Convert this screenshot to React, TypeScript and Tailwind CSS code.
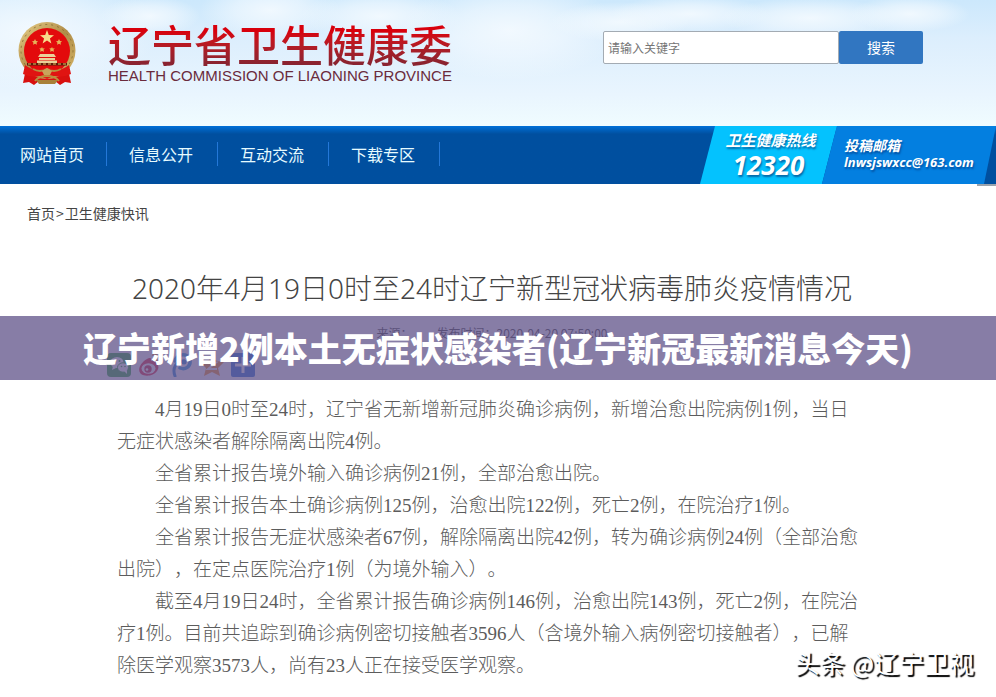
const navItems = ["网站首页", "信息公开", "互动交流", "下载专区"];

const paragraphs = [
  "4月19日0时至24时，辽宁省无新增新冠肺炎确诊病例，新增治愈出院病例1例，当日无症状感染者解除隔离出院4例。",
  "全省累计报告境外输入确诊病例21例，全部治愈出院。",
  "全省累计报告本土确诊病例125例，治愈出院122例，死亡2例，在院治疗1例。",
  "全省累计报告无症状感染者67例，解除隔离出院42例，转为确诊病例24例（全部治愈出院），在定点医院治疗1例（为境外输入）。",
  "截至4月19日24时，全省累计报告确诊病例146例，治愈出院143例，死亡2例，在院治疗1例。目前共追踪到确诊病例密切接触者3596人（含境外输入病例密切接触者），已解除医学观察3573人，尚有23人正在接受医学观察。",
];

const clouds = [
  { cx: 30, cy: 30, rx: 130, ry: 60 },
  { cx: 150, cy: 16, rx: 50, ry: 20 },
  { cx: 270, cy: 10, rx: 70, ry: 30 },
  { cx: 380, cy: 16, rx: 80, ry: 26 },
  { cx: 510, cy: 30, rx: 110, ry: 50 },
  { cx: 620, cy: 22, rx: 70, ry: 20 },
  { cx: 690, cy: 14, rx: 80, ry: 18 },
  { cx: 810, cy: 18, rx: 90, ry: 20 },
  { cx: 910, cy: 14, rx: 60, ry: 18 },
];

function Sky() {
  return (
    <svg
      className="absolute inset-0 h-full w-full"
      viewBox="0 0 996 126"
      preserveAspectRatio="none"
      aria-hidden="true"
    >
      <defs>
        <linearGradient id="sky" x1="0" y1="0" x2="0" y2="1">
          <stop offset="0" stopColor="#cce8fc" />
          <stop offset="0.3" stopColor="#dceefd" />
          <stop offset="0.75" stopColor="#e9f5fe" />
          <stop offset="1" stopColor="#f0fcff" />
        </linearGradient>
        <radialGradient id="cloud">
          <stop offset="0" stopColor="#f6fbff" stopOpacity="0.85" />
          <stop offset="0.5" stopColor="#f4faff" stopOpacity="0.55" />
          <stop offset="1" stopColor="#f4faff" stopOpacity="0" />
        </radialGradient>
      </defs>
      <rect width="996" height="126" fill="url(#sky)" />
      {clouds.map((c) => (
        <ellipse key={c.cx} {...c} fill="url(#cloud)" />
      ))}
    </svg>
  );
}

function Emblem() {
  return (
    <svg className="h-16 w-[58px]" viewBox="0 0 58 64" role="img" aria-label="国徽">
      <defs>
        <linearGradient id="gold" x1="0" y1="0" x2="1" y2="1">
          <stop offset="0" stopColor="#e9d08a" />
          <stop offset="0.5" stopColor="#b08d48" />
          <stop offset="1" stopColor="#d8b868" />
        </linearGradient>
      </defs>
      <path d="M9 42 5 61l6-1 5 3 5-4h16l5 4 5-3 6 1-4-19z" fill="#d8100f" />
      <circle cx="29" cy="28.500" r="28.500" fill="url(#gold)" />
      <circle cx="29" cy="28.500" r="26" fill="none" stroke="#8f7436" strokeWidth="1" strokeDasharray="2 4" />
      <circle cx="29" cy="29" r="23" fill="#e30a0c" />
      <path d="m29 8 1.800 5 5.200.2-4.100 3.200 1.500 5L29 18.500l-4.400 2.900 1.500-5-4.100-3.200 5.200-.2z" fill="#f7dc8b" />
      <path d="m17 17 1 2 2 .2-1.500 1.500.5 2-2-1-2 1 .5-2-1.500-1.500 2-.2zM41 17l1 2 2 .2-1.500 1.500.5 2-2-1-2 1 .5-2-1.500-1.500 2-.2z" fill="#e6b35a" />
      <path d="m24 25 .8 1.500 2-.2-1.300 1.500.5 2-2-.9-1.800.9.3-2-1.300-1.400 2-.1zM34 25l.8 1.500 2-.2-1.300 1.500.5 2-2-.9-1.800.9.3-2-1.300-1.400 2-.1z" fill="#e6b35a" />
      <path d="M22 32h14l2 3H20zM21 36h16v2H21zM19 38.500h20V41H19z" fill="#ead09a" />
      <path d="M9 41h40v2.500H9z" fill="#5d1a0d" />
      <path d="M10 42h38" stroke="#b98a42" strokeWidth="1.500" strokeDasharray="3 2" />
      <path d="M7 43q8 6 16 4l6-2 6 2q8 2 16-4l2 9q-8 4-17 2l-7 3-7-3q-9 2-17-2z" fill="#e01412" />
      <path d="M15 47q7 4 14 0 7 4 14 0M17 59q4-5 12-5t12 5" fill="none" stroke="#b9903f" strokeWidth="2" />
      <path d="m24 49 5-3 5 3-2 4h-6z" fill="#c9a35a" />
      <path d="M18 58h22l-3 4H21z" fill="#a88139" />
    </svg>
  );
}

function ShareIcons() {
  return (
    <div className="flex gap-[7px]">
      <button aria-label="微信" className="size-6">
        <svg viewBox="0 0 24 24">
          <rect width="24" height="24" rx="4" fill="#0a9a1d" />
          <ellipse cx="10" cy="9.500" rx="6.500" ry="5.500" fill="#fff" />
          <path d="m6 13-1 4 4-2z" fill="#fff" />
          <ellipse cx="16" cy="14.500" rx="5.500" ry="4.700" fill="#fff" stroke="#0a9a1d" />
          <path d="m17 18 3 3v-4z" fill="#fff" />
          <g fill="#0a9a1d">
            <circle cx="8" cy="8" r="1" />
            <circle cx="12.500" cy="8" r="1" />
            <circle cx="14.500" cy="13.500" r="0.800" />
            <circle cx="18" cy="13.500" r="0.800" />
          </g>
        </svg>
      </button>
      <button aria-label="微博" className="size-6">
        <svg viewBox="0 0 24 24">
          <path d="M9 6c3-2 5-1 4 2 4-1 6 0 5 3 3 1 3 4 1 7-3 5-12 6-16 3C-1 17 2 10 9 6z" fill="#e0001f" />
          <ellipse cx="10.500" cy="15.500" rx="7" ry="5.200" fill="#fff" />
          <circle cx="10" cy="16" r="3.700" fill="#c4001f" />
          <circle cx="9" cy="16.500" r="1.300" fill="#fff" />
          <path d="M15 2c5-1 8 3 7 8M15.500 5.500c3 0 4 2 3.500 4" fill="none" stroke="#f28a1c" strokeWidth="2" strokeLinecap="round" />
        </svg>
      </button>
      <button aria-label="腾讯微博" className="size-6">
        <svg viewBox="0 0 24 24" fill="none" strokeLinecap="round">
          <path d="M6 23C3 15 7 8 15 8" stroke="#0070d0" strokeWidth="3" />
          <path d="M6 8c1-7 13-9 15-1 1 7-5 10-10 8" stroke="#0a8ae0" strokeWidth="3.500" />
          <circle cx="15" cy="9" r="2.500" fill="#0070d0" />
        </svg>
      </button>
      <button aria-label="QQ空间" className="size-6">
        <svg viewBox="0 0 24 24">
          <path d="m12 0 3.500 7.500L24 9l-6 6 2 8-8-4-8 4 2-8-6-6 8.500-1.500z" fill="#f57c00" />
          <path d="M7 9.500h9l-8 6.500h9" fill="none" stroke="#fff" strokeWidth="2" />
        </svg>
      </button>
      <button aria-label="更多分享" className="size-6">
        <svg viewBox="0 0 24 24">
          <rect width="24" height="24" rx="2" fill="#0058d0" />
          <path d="M12 4v16M4 12h16" stroke="#fff" strokeWidth="3" />
        </svg>
      </button>
    </div>
  );
}

function Header() {
  return (
    <header className="relative">
      <Sky />
      <div className="relative flex h-[126px] items-start justify-between pl-[18px] pr-[73px]">
        <div className="flex pt-[22px]">
          <Emblem />
          <div className="ml-8 w-fit">
            <h1 className="bg-linear-to-b from-[#d8000c] from-20% to-[#8a2330] to-90% bg-clip-text pb-1 text-[43px] leading-[42px] font-medium text-transparent">
              辽宁省卫生健康委
            </h1>
            <p className="font-['Liberation_Sans'] text-[15px] leading-4 whitespace-nowrap text-[#6a2b3c]">
              HEALTH COMMISSION OF LIAONING PROVINCE
            </p>
          </div>
        </div>
        <form className="flex pt-[31px]" onSubmit={(e) => e.preventDefault()}>
          <input
            type="text"
            aria-label="关键字"
            placeholder="请输入关键字"
            className="h-[33px] w-[236px] rounded-xs border border-[#a3abb3] bg-white px-1 text-xs placeholder:text-[#757575]"
          />
          <button className="h-[33px] w-[84px] rounded-xs bg-[#3176c1] pb-0.5 text-sm text-white">
            搜索
          </button>
        </form>
      </div>
    </header>
  );
}

function Nav() {
  return (
    <nav className="relative flex h-[58px] justify-between bg-linear-to-b from-[#0070d8] to-[#004f9f] to-14%">
      <ul className="flex items-center pb-0.5">
        {navItems.map((item) => (
          <li
            key={item}
            className="border-r border-[#2478d8] pr-6 pl-[22px] text-base leading-6 text-[#e6fbff] first:pr-[22px] first:pl-5"
          >
            <a href="#">{item}</a>
          </li>
        ))}
      </ul>
      <div className="flex font-['Open_Sans','Noto_Sans_CJK_SC',sans-serif] font-bold text-white italic">
        <div className="w-[137px] bg-[#04c2fe] pt-[3px] text-center [clip-path:polygon(15px_0,100%_0,calc(100%-15px)_100%,0_100%)] [text-shadow:1px_2px_2px_#0468a8]">
          <p className="pl-1 text-[15px] leading-[22px]">卫生健康热线</p>
          <p className="text-[26px] leading-7">12320</p>
        </div>
        <div className="-ml-[15px] w-[174px] bg-[#037fe0] pt-3 pl-[22px] [clip-path:polygon(15px_0,100%_0,calc(100%-12px)_100%,0_100%)] [text-shadow:1px_2px_2px_#0450a0]">
          <p className="text-sm leading-4">投稿邮箱</p>
          <p className="text-[13px] leading-4">
            <a href="mailto:lnwsjswxcc@163.com">lnwsjswxcc@163.com</a>
          </p>
        </div>
      </div>
      <span className="absolute top-full right-0 h-0.5 w-[19px] bg-[#9aa3ad]" />
    </nav>
  );
}

export default function App() {
  return (
    <div
      lang="zh-CN"
      className="relative min-h-screen bg-white font-['Noto_Sans_CJK_SC',sans-serif] text-[#444]"
    >
      <Header />
      <Nav />

      <main className="pb-4">
        <p className="pt-[19px] pl-[27px] text-sm leading-5">
          <a href="#">首页</a>
          <span className="mx-px">&gt;</span>
          <a href="#">卫生健康快讯</a>
        </p>

        <h2 className="pt-[45px] pr-3 text-center font-['Noto_Sans','Noto_Sans_CJK_SC',sans-serif] text-[28px] leading-10 font-light text-[#444]">
          2020年4月19日0时至24时辽宁新型冠状病毒肺炎疫情情况
        </h2>

        <div className="relative mt-2 h-16">
          <p className="flex justify-center gap-6 pt-[9px] pr-3 text-xs leading-4 text-[#222]">
            <span>来源：</span>
            <span>发布时间：2020-04-20 07:50:00</span>
          </p>
          <div className="mt-3 pl-[107px]">
            <ShareIcons />
          </div>
          <div className="absolute inset-0 flex items-center justify-center bg-[#695d90]/80 text-[34px] leading-none font-black whitespace-nowrap text-white">
            辽宁新增2例本土无症状感染者(辽宁新冠最新消息今天)
          </div>
        </div>

        <article className="ml-[117px] max-w-[748px] pt-[14px] font-['Liberation_Serif','Noto_Sans_CJK_SC',serif] text-[19px] leading-8 font-light text-[#5c5c5c] [text-spacing-trim:space-all]">
          {paragraphs.map((text) => (
            <p key={text} className="indent-[38px]">
              {text}
            </p>
          ))}
        </article>
      </main>

      <p className="absolute right-[22px] bottom-5 text-[25px] leading-8 text-white [text-shadow:2px_2px_1px_#000]">
        头条 @辽宁卫视
      </p>
    </div>
  );
}
